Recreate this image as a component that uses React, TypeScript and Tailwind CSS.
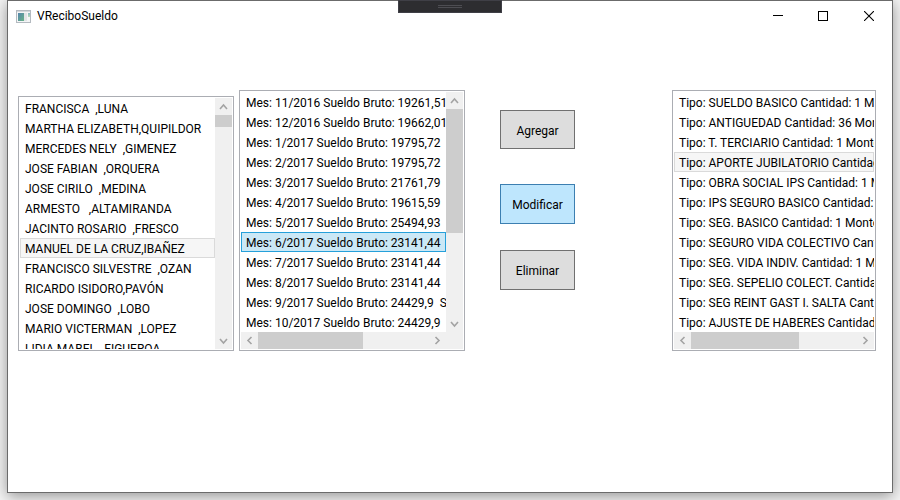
import React, { useState } from "react";

type Direction = "up" | "down" | "left" | "right";

const arrowPaths: Record<Direction, string> = {
  up: "M5 11 8.5 7 12 11",
  down: "M5 7 8.5 11 12 7",
  left: "M10.5 5 7 8.5 10.5 12",
  right: "M6.5 5 10 8.5 6.5 12",
};

function ScrollArrow({ direction, label }: { direction: Direction; label: string }) {
  return (
    <button type="button" aria-label={label} className="h-[17px] w-[17px] shrink-0">
      <svg viewBox="0 0 17 17" className="block h-[17px] w-[17px]" fill="none" stroke="#a3a3a3" strokeWidth="1.6">
        <path d={arrowPaths[direction]} />
      </svg>
    </button>
  );
}

function VerticalBar({ thumb }: { thumb: string }) {
  return (
    <div className="flex w-[17px] shrink-0 flex-col bg-[#f0f0f0]">
      <ScrollArrow direction="up" label="Subir" />
      <div className="flex-1">
        <div className={`bg-[#cdcdcd] ${thumb}`} />
      </div>
      <ScrollArrow direction="down" label="Bajar" />
    </div>
  );
}

function HorizontalBar({ thumb, corner }: { thumb: string; corner: boolean }) {
  return (
    <div className="flex h-[17px] shrink-0 bg-[#f0f0f0]">
      <ScrollArrow direction="left" label="Izquierda" />
      <div className="flex-1">
        <div className={`h-[17px] bg-[#cdcdcd] ${thumb}`} />
      </div>
      <ScrollArrow direction="right" label="Derecha" />
      {corner && <div className="w-[17px]" />}
    </div>
  );
}

interface ListBoxProps {
  label: string;
  items: string[];
  initial: number;
  size: string;
  selectedStyle: string;
  verticalThumb?: string;
  horizontalThumb?: string;
}

function ListBox({ label, items, initial, size, selectedStyle, verticalThumb, horizontalThumb }: ListBoxProps) {
  const [selected, setSelected] = useState(initial);
  return (
    <div className={`flex shrink-0 flex-col border border-[#abadb3] bg-white p-px ${size}`}>
      <div className="flex min-h-0 flex-1">
        <ul role="listbox" aria-label={label} className="min-w-0 flex-1 overflow-hidden">
          {items.map((item, index) => (
            <li
              key={item}
              role="option"
              aria-selected={index === selected}
              onClick={() => setSelected(index)}
              className={`h-5 cursor-default border pl-1 leading-5 whitespace-pre ${
                index === selected ? selectedStyle : "border-transparent"
              }`}
            >
              {item}
            </li>
          ))}
        </ul>
        {verticalThumb && <VerticalBar thumb={verticalThumb} />}
      </div>
      {horizontalThumb && <HorizontalBar thumb={horizontalThumb} corner={Boolean(verticalThumb)} />}
    </div>
  );
}

const empleados = [
  "FRANCISCA  ,LUNA",
  "MARTHA ELIZABETH,QUIPILDOR",
  "MERCEDES NELY  ,GIMENEZ",
  "JOSE FABIAN  ,ORQUERA",
  "JOSE CIRILO  ,MEDINA",
  "ARMESTO   ,ALTAMIRANDA",
  "JACINTO ROSARIO  ,FRESCO",
  "MANUEL DE LA CRUZ,IBAÑEZ",
  "FRANCISCO SILVESTRE  ,OZAN",
  "RICARDO ISIDORO,PAVÓN",
  "JOSE DOMINGO  ,LOBO",
  "MARIO VICTERMAN  ,LOPEZ",
  "LIDIA MABEL  ,FIGUEROA",
];

const recibos = [
  "Mes: 11/2016 Sueldo Bruto: 19261,51",
  "Mes: 12/2016 Sueldo Bruto: 19662,01",
  "Mes: 1/2017 Sueldo Bruto: 19795,72  S",
  "Mes: 2/2017 Sueldo Bruto: 19795,72  S",
  "Mes: 3/2017 Sueldo Bruto: 21761,79  S",
  "Mes: 4/2017 Sueldo Bruto: 19615,59  S",
  "Mes: 5/2017 Sueldo Bruto: 25494,93  S",
  "Mes: 6/2017 Sueldo Bruto: 23141,44  S",
  "Mes: 7/2017 Sueldo Bruto: 23141,44  S",
  "Mes: 8/2017 Sueldo Bruto: 23141,44  S",
  "Mes: 9/2017 Sueldo Bruto: 24429,9  Su",
  "Mes: 10/2017 Sueldo Bruto: 24429,9  S",
];

const detalles = [
  "Tipo: SUELDO BASICO Cantidad: 1 Mo",
  "Tipo: ANTIGUEDAD Cantidad: 36 Mon",
  "Tipo: T. TERCIARIO Cantidad: 1 Monto",
  "Tipo: APORTE JUBILATORIO Cantidad",
  "Tipo: OBRA SOCIAL IPS Cantidad: 1 M",
  "Tipo: IPS SEGURO BASICO Cantidad:",
  "Tipo: SEG. BASICO Cantidad: 1 Monto",
  "Tipo: SEGURO VIDA COLECTIVO Cant",
  "Tipo: SEG. VIDA INDIV. Cantidad: 1 M",
  "Tipo: SEG. SEPELIO COLECT. Cantidad",
  "Tipo: SEG REINT GAST I. SALTA Cantid",
  "Tipo: AJUSTE DE HABERES Cantidad:",
];

const inactive = "border-[#dadada] bg-[#f6f6f6]";
const active = "border-[#26a0da] bg-[#cbe8f6]";

function AppIcon() {
  return (
    <svg viewBox="0 0 15 13" className="h-[13px] w-[15px]" aria-hidden="true">
      <defs>
        <linearGradient id="pane" x1="0" y1="0" x2="1" y2="1">
          <stop offset="0" stopColor="#5586ad" />
          <stop offset="1" stopColor="#68b287" />
        </linearGradient>
        <linearGradient id="side" x1="0" y1="0" x2="0" y2="1">
          <stop offset="0" stopColor="#86b6c4" />
          <stop offset="1" stopColor="#b9dcb9" />
        </linearGradient>
      </defs>
      <rect x="0.5" y="0.5" width="14" height="12" fill="#f4f5f6" stroke="#b4bac0" />
      <rect x="1" y="1" width="13" height="1" fill="#d3d7db" />
      <rect x="2" y="3" width="6" height="8" fill="url(#pane)" />
      <rect x="8" y="3" width="3" height="8" fill="#e2e4e6" />
      <rect x="12" y="3" width="2" height="4" fill="url(#side)" />
    </svg>
  );
}

export default function App() {
  return (
    <div className="min-h-screen overflow-hidden bg-[#f4f4f4] px-[7px] font-[Roboto,sans-serif] text-[12px] text-black">
      <div className="relative flex h-[calc(100vh-7px)] flex-col border border-[#6b6b6b] bg-white shadow-[0_3px_14px_rgba(0,0,0,0.4)]">
        <header className="flex h-[30px] shrink-0 items-center pl-2">
          <AppIcon />
          <h1 className="ml-1.5 flex-1">VReciboSueldo</h1>
          <button type="button" aria-label="Minimizar" className="flex h-full w-[45px] items-center justify-center">
            <svg viewBox="0 0 10 10" className="h-2.5 w-2.5" shapeRendering="crispEdges">
              <rect y="4" width="10" height="1" />
            </svg>
          </button>
          <button type="button" aria-label="Maximizar" className="flex h-full w-[46px] items-center justify-center">
            <svg viewBox="0 0 10 10" className="h-2.5 w-2.5" shapeRendering="crispEdges">
              <rect x="0.5" y="0.5" width="9" height="9" fill="none" stroke="#000" />
            </svg>
          </button>
          <button type="button" aria-label="Cerrar" className="flex h-full w-[46px] items-center justify-center">
            <svg viewBox="0 0 10 10" className="h-2.5 w-2.5" stroke="#000" strokeWidth="1.1">
              <path d="M0 0 10 10M10 0 0 10" />
            </svg>
          </button>
        </header>

        <div className="absolute -top-px left-[390px] flex h-[13px] w-[104px] flex-col items-center gap-px border border-[#3f3f46] bg-[#2d2d30] pt-1">
          <div className="h-px w-6 bg-[#4d4d52]" />
          <div className="h-px w-6 bg-[#4d4d52]" />
        </div>

        <main className="flex items-start pt-[59px] pr-4 pl-2.5">
          <div className="flex items-end gap-[5px]">
            <ListBox
              label="Empleados"
              items={empleados}
              initial={7}
              size="h-[255px] w-[216px]"
              selectedStyle={inactive}
              verticalThumb="h-3"
            />
            <ListBox
              label="Recibos"
              items={recibos}
              initial={7}
              size="h-[261px] w-[226px]"
              selectedStyle={active}
              verticalThumb="h-[124px]"
              horizontalThumb="w-[105px]"
            />
          </div>
          <div className="ml-[35px] flex w-[75px] flex-col pt-5">
            <button type="button" className="h-[39px] border border-[#707070] bg-[#dddddd] pt-0.5">
              Agregar
            </button>
            <button type="button" className="mt-[35px] h-10 border border-[#3c7fb1] bg-[#bee6fd] pt-0.5">
              Modificar
            </button>
            <button type="button" className="mt-[26px] h-10 border border-[#707070] bg-[#dddddd] pt-0.5">
              Eliminar
            </button>
          </div>
          <div className="ml-auto">
            <ListBox
              label="Detalle del recibo"
              items={detalles}
              initial={3}
              size="h-[261px] w-[204px]"
              selectedStyle={inactive}
              horizontalThumb="w-[108px]"
            />
          </div>
        </main>
      </div>
    </div>
  );
}
